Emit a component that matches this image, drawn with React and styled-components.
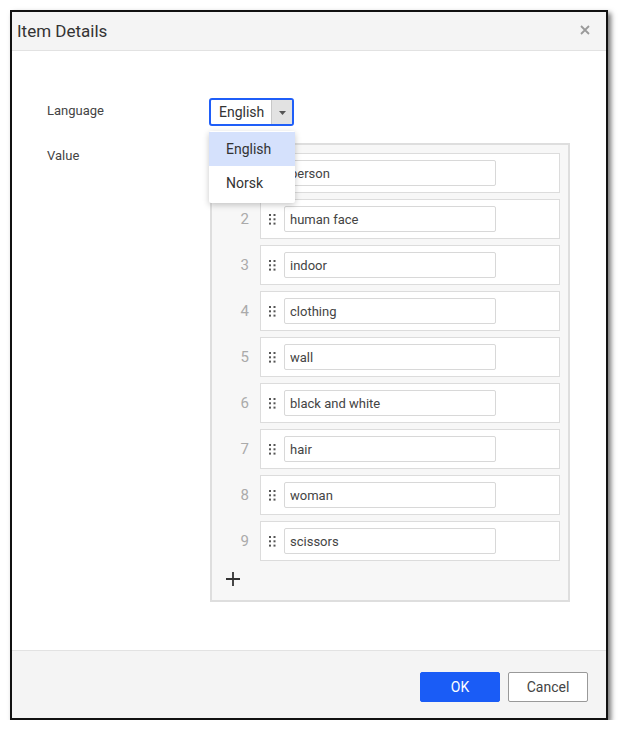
import React from "react";
import styled, { createGlobalStyle } from "styled-components";

const items = [
  "person",
  "human face",
  "indoor",
  "clothing",
  "wall",
  "black and white",
  "hair",
  "woman",
  "scissors",
];

export default function App() {
  return (
    <Page>
      <GlobalStyle />
      <Dialog>
        <Header>
          <Title>Item Details</Title>
          <Close aria-label="close">
            <svg width="10" height="10" viewBox="0 0 10 10">
              <path d="M1 1 L9 9 M9 1 L1 9" stroke="#9a9a9a" strokeWidth="1.8" />
            </svg>
          </Close>
        </Header>
        <Body>
          <Form>
            <Label>Language</Label>
            <SelectWrap>
              <Select>
                <SelectText>English</SelectText>
                <SelectArrow>
                  <svg width="7" height="4" viewBox="0 0 7 4">
                    <path d="M0 0 L7 0 L3.5 4 Z" fill="#555" />
                  </svg>
                </SelectArrow>
              </Select>
              <Menu>
                <MenuItem active>English</MenuItem>
                <MenuItem>Norsk</MenuItem>
              </Menu>
            </SelectWrap>
            <Label>Value</Label>
            <List>
              {items.map((item, i) => (
                <ListRow key={item}>
                  <Num>{i + 1}</Num>
                  <Card>
                    <Handle>
                      <svg width="7" height="11" viewBox="0 0 7 11">
                        {[0, 1, 2].map((r) =>
                          [0, 1].map((c) => (
                            <rect
                              key={r + "-" + c}
                              x={c * 4.5}
                              y={r * 4.3}
                              width="2"
                              height="2"
                              fill="#555"
                            />
                          ))
                        )}
                      </svg>
                    </Handle>
                    <Input defaultValue={item} />
                  </Card>
                </ListRow>
              ))}
              <AddRow>
                <svg width="14" height="14" viewBox="0 0 14 14">
                  <path d="M7 0 V14 M0 7 H14" stroke="#333" strokeWidth="1.8" />
                </svg>
              </AddRow>
            </List>
          </Form>
        </Body>
        <Footer>
          <Button primary>OK</Button>
          <Button>Cancel</Button>
        </Footer>
      </Dialog>
    </Page>
  );
}

const GlobalStyle = createGlobalStyle`
  body {
    margin: 0;
    background: #fff;
    font-family: Roboto, "Liberation Sans", sans-serif;
  }
  * { box-sizing: border-box; }
`;

const Page = styled.div`
  padding: 10px 0 0 10px;
`;

const Dialog = styled.div`
  width: 598px;
  height: 710px;
  border: 2px solid #111;
  background: #fff;
  display: flex;
  flex-direction: column;
  box-shadow: 3px 3px 5px rgba(0, 0, 0, 0.55);
`;

const Header = styled.div`
  height: 39px;
  background: #f4f4f4;
  border-bottom: 1px solid #e2e2e2;
  display: flex;
  align-items: center;
  justify-content: space-between;
  padding: 0 16px 0 5px;
`;

const Title = styled.div`
  font-size: 17px;
  color: #333;
`;

const Close = styled.div`
  display: flex;
  align-items: center;
  margin-top: -2px;
`;

const Body = styled.div`
  flex: 1;
  padding: 47px 0 0 35px;
`;

const Form = styled.div`
  display: grid;
  grid-template-columns: 163px 361px;
  row-gap: 17px;
`;

const Label = styled.div`
  font-size: 13px;
  line-height: 26px;
  color: #444;
`;

const SelectWrap = styled.div`
  position: relative;
  width: 86px;
  margin-left: -1px;
`;

const Select = styled.div`
  display: flex;
  height: 28px;
  width: 85px;
  border: 2px solid #1f5ef8;
  border-radius: 3px;
  overflow: hidden;
  background: #fff;
`;

const SelectText = styled.div`
  flex: 1;
  font-size: 14px;
  color: #333;
  line-height: 24px;
  padding-left: 8px;
`;

const SelectArrow = styled.div`
  width: 21px;
  background: #e2e2e2;
  border-left: 1px solid #c8c8c8;
  display: flex;
  align-items: center;
  justify-content: center;
  padding-top: 2px;
`;

const Menu = styled.div`
  position: absolute;
  top: 33px;
  left: 0;
  width: 86px;
  background: #fff;
  padding: 1px 0 3px;
  box-shadow: 0 2px 6px rgba(0, 0, 0, 0.22);
  border-radius: 2px;
  z-index: 2;
`;

const MenuItem = styled.div`
  height: 34px;
  line-height: 34px;
  padding-left: 17px;
  font-size: 14px;
  color: #333;
  background: ${(p) => (p.active ? "#d5e1fc" : "#fff")};
`;

const List = styled.div`
  width: 360px;
  border: 2px solid #dedede;
  background: #f7f7f7;
  padding: 8px 8px 0 0;
  display: flex;
  flex-direction: column;
  gap: 6px;
`;

const ListRow = styled.div`
  display: flex;
  height: 40px;
`;

const Num = styled.div`
  width: 48px;
  text-align: right;
  padding-right: 11px;
  line-height: 40px;
  font-size: 15px;
  color: #aaa;
`;

const Card = styled.div`
  flex: 1;
  background: #fff;
  border: 1px solid #dcdcdc;
  display: flex;
  align-items: center;
  padding-left: 8px;
`;

const Handle = styled.div`
  width: 15px;
  display: flex;
  align-items: center;
`;

const Input = styled.input`
  width: 212px;
  height: 26px;
  border: 1px solid #d8d8d8;
  border-radius: 2px;
  padding: 0 5px;
  font-family: inherit;
  font-size: 13px;
  color: #444;
  outline: none;
`;

const AddRow = styled.div`
  display: flex;
  padding: 5px 0 14px 14px;
`;

const Footer = styled.div`
  height: 68px;
  background: #f4f4f4;
  border-top: 1px solid #e2e2e2;
  display: flex;
  align-items: center;
  justify-content: flex-end;
  gap: 8px;
  padding: 4px 18px 0 0;
`;

const Button = styled.button`
  width: 80px;
  height: 30px;
  border-radius: 2px;
  font-family: inherit;
  font-size: 14px;
  cursor: pointer;
  background: ${(p) => (p.primary ? "#1a5cf6" : "#fff")};
  color: ${(p) => (p.primary ? "#fff" : "#444")};
  border: 1px solid ${(p) => (p.primary ? "#1a5cf6" : "#999")};
`;
